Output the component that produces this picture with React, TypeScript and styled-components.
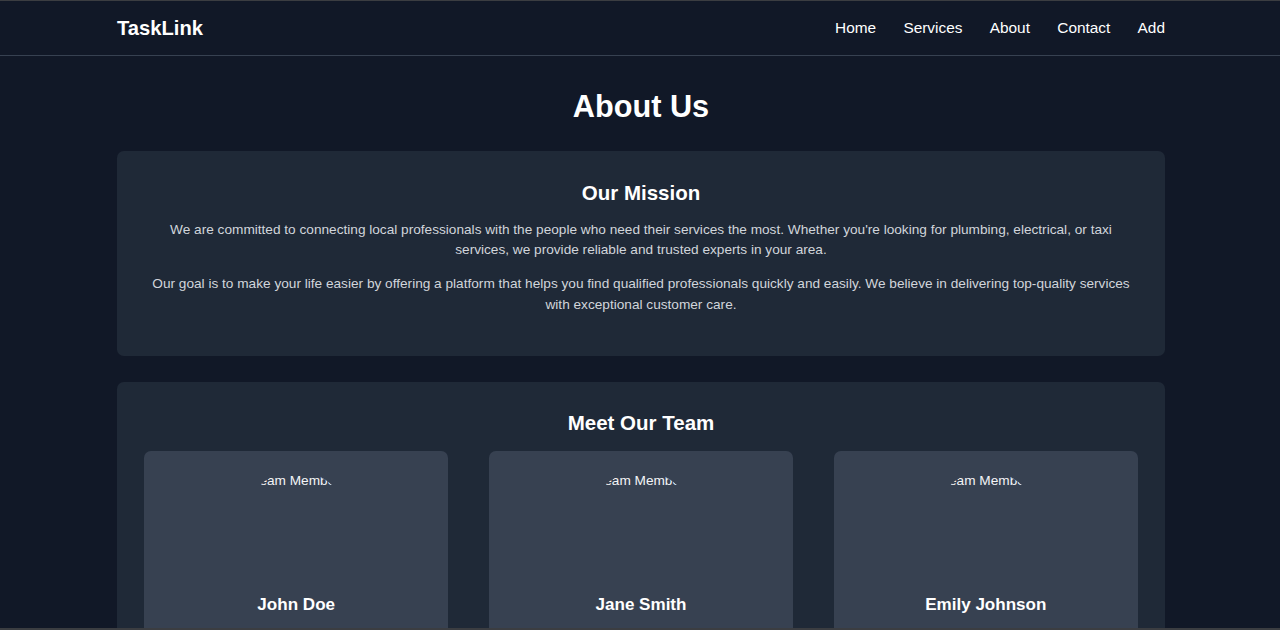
import React from "react";
import styled, { createGlobalStyle } from "styled-components";

const Global = createGlobalStyle`
  html, body { margin: 0; padding: 0; background: #111827; }
  body { font-family: "Liberation Sans", Arial, sans-serif; color: #f3f4f6; }
  * { box-sizing: border-box; }
`;

const Frame = styled.div`
  height: 100vh;
  overflow: hidden;
  background: #111827;
  border-top: 1px solid #3b3d41;
  border-bottom: 2px solid #3b3d41;
  padding-left: 2px;
`;

const Header = styled.header`
  height: 54.6px;
  border-bottom: 1px solid #374151;
  background: #111827;
  margin-left: -2px;
  padding-left: 2px;
`;

const Container = styled.div`
  max-width: 1048px;
  margin: 0 auto;
`;

const HeaderInner = styled(Container)`
  height: 100%;
  display: flex;
  align-items: center;
  justify-content: space-between;
  padding-top: 1px;
`;

const Logo = styled.div`
  font-size: 20.2px;
  font-weight: 700;
  color: #ffffff;
`;

const Nav = styled.nav`
  display: flex;
  gap: 27.3px;
`;

const NavLink = styled.a`
  font-size: 15.4px;
  color: #ffffff;
  text-decoration: none;
`;

const Main = styled(Container)`
  padding-top: 34.5px;
`;

const Title = styled.h1`
  margin: 0 0 27.3px;
  font-size: 30.7px;
  line-height: 34.1px;
  font-weight: 700;
  text-align: center;
  color: #ffffff;
`;

const Section = styled.section<{ $gapAfter: number }>`
  background: #1f2937;
  border-radius: 6.8px;
  padding: 27.3px;
  margin-bottom: ${(p) => p.$gapAfter}px;
  text-align: center;
`;

const SectionTitle = styled.h2<{ $below: number }>`
  margin: 0 0 ${(p) => p.$below}px;
  font-size: 20.5px;
  line-height: 27.3px;
  font-weight: 700;
  color: #ffffff;
`;

const Para = styled.p`
  margin: 0 0 13.65px;
  font-size: 13.65px;
  line-height: 20.5px;
  color: #d1d5db;
`;

const TeamGrid = styled.div`
  display: grid;
  grid-template-columns: repeat(3, 1fr);
  gap: 41px;
`;

const Card = styled.div`
  background: #374151;
  border-radius: 6.8px;
  padding: 20.5px;
  text-align: center;
`;

const Avatar = styled.div`
  width: 106px;
  height: 106px;
  margin: 0 auto 15.65px;
  border-radius: 50%;
  overflow: hidden;
  font-size: 13.65px;
  line-height: 20.5px;
  color: #f3f4f6;
  white-space: nowrap;
  display: flex;
  justify-content: center;
`;

const Name = styled.h3`
  margin: 0;
  font-size: 17.06px;
  line-height: 23.9px;
  font-weight: 700;
  color: #ffffff;
`;

const team = ["John Doe", "Jane Smith", "Emily Johnson"];

export default function App() {
  return (
    <>
      <Global />
      <Frame>
        <Header>
          <HeaderInner>
            <Logo>TaskLink</Logo>
            <Nav>
              <NavLink href="#">Home</NavLink>
              <NavLink href="#">Services</NavLink>
              <NavLink href="#">About</NavLink>
              <NavLink href="#">Contact</NavLink>
              <NavLink href="#">Add</NavLink>
            </Nav>
          </HeaderInner>
        </Header>
        <Main>
          <Title>About Us</Title>
          <Section $gapAfter={25.3}>
            <SectionTitle $below={13.65}>Our Mission</SectionTitle>
            <Para>
              We are committed to connecting local professionals with the people who need their services the most. Whether you're looking for plumbing, electrical, or taxi services, we provide reliable and trusted experts in your area.
            </Para>
            <Para>
              Our goal is to make your life easier by offering a platform that helps you find qualified professionals quickly and easily. We believe in delivering top-quality services with exceptional customer care.
            </Para>
          </Section>
          <Section $gapAfter={27.3}>
            <SectionTitle $below={14.65}>Meet Our Team</SectionTitle>
            <TeamGrid>
              {team.map((n) => (
                <Card key={n}>
                  <Avatar>Team Member</Avatar>
                  <Name>{n}</Name>
                </Card>
              ))}
            </TeamGrid>
          </Section>
        </Main>
      </Frame>
    </>
  );
}
